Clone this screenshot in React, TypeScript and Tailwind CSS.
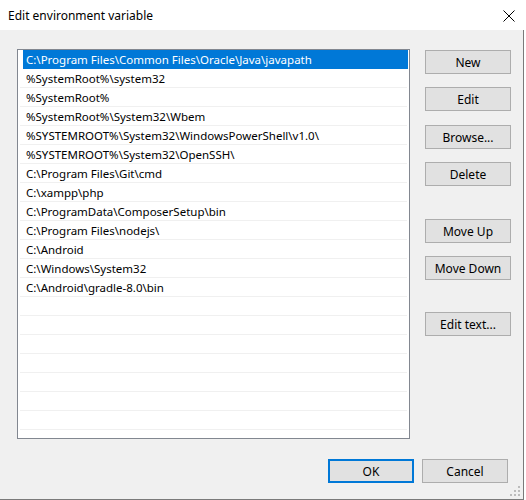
import type { FC } from 'react'

const paths: string[] = [
  'C:\\Program Files\\Common Files\\Oracle\\Java\\javapath',
  '%SystemRoot%\\system32',
  '%SystemRoot%',
  '%SystemRoot%\\System32\\Wbem',
  '%SYSTEMROOT%\\System32\\WindowsPowerShell\\v1.0\\',
  '%SYSTEMROOT%\\System32\\OpenSSH\\',
  'C:\\Program Files\\Git\\cmd',
  'C:\\xampp\\php',
  'C:\\ProgramData\\ComposerSetup\\bin',
  'C:\\Program Files\\nodejs\\',
  'C:\\Android',
  'C:\\Windows\\System32',
  'C:\\Android\\gradle-8.0\\bin'
]

// the list shows empty rows below the entries
const rows: string[] = [...paths, ...Array(8).fill('')]

const DialogButton: FC<{ label: string; className?: string; primary?: boolean }> = ({
  label,
  className = '',
  primary = false
}) => (
  <button
    type="button"
    className={`w-[86px] h-[24px] bg-[#e1e1e1] text-[12px] text-black leading-none flex items-center justify-center pt-[1px] ${
      primary ? 'border-2 border-[#0078d7]' : 'border border-[#adadad]'
    } ${className}`}
  >
    {label}
  </button>
)

const ResizeGrip: FC = () => (
  <svg width="10" height="10" viewBox="0 0 10 10" className="absolute right-[3px] bottom-[3px]">
    {[
      [8, 0],
      [4, 4],
      [8, 4],
      [0, 8],
      [4, 8],
      [8, 8]
    ].map(([x, y]) => (
      <rect key={`${x}-${y}`} x={x} y={y} width="2" height="2" fill="#bcbcbc" />
    ))}
  </svg>
)

export default function App() {
  return (
    <div
      className="w-[526px] h-[500px] bg-white flex flex-col overflow-hidden text-black"
      style={{ fontFamily: '"Noto Sans", "Open Sans", Arial, sans-serif' }}
    >
      {/* title bar */}
      <div className="h-[30px] shrink-0 bg-white flex items-center justify-between pl-[8px] pr-[10px] pt-[1px]">
        <span className="text-[12px] leading-none">Edit environment variable</span>
        <svg width="12" height="12" viewBox="0 0 12 12" className="mr-[1px]">
          <path d="M0.5 0.5L11.5 11.5M11.5 0.5L0.5 11.5" stroke="#000" strokeWidth="1" fill="none" />
        </svg>
      </div>

      {/* body */}
      <div className="relative flex-1 w-[524px] bg-[#f0f0f0] border-r border-b border-[#7a7a7a] flex flex-col">
        <div className="flex pt-[19px] pl-[17px]">
          <div className="w-[393px] h-[390px] bg-white border border-[#828790] pl-[5px] pr-[1px] overflow-hidden">
            {rows.map((path, i) => (
              <div
                key={i}
                className={`h-[19px] flex items-center pt-[2px] text-[11.5px] leading-none whitespace-nowrap border-b ${
                  i === 0
                    ? 'bg-[#0078d7] text-white border-[#0078d7] pl-[3px]'
                    : 'border-[#f0f0f0] ml-[-3px] mr-[1px] pl-[6px]'
                }`}
              >
                {path}
              </div>
            ))}
          </div>

          <div className="flex flex-col ml-[15px] pt-[1px]">
            <DialogButton label="New" />
            <DialogButton label="Edit" className="mt-[13px]" />
            <DialogButton label="Browse..." className="mt-[14px]" />
            <DialogButton label="Delete" className="mt-[13px]" />
            <DialogButton label="Move Up" className="mt-[33px]" />
            <DialogButton label="Move Down" className="mt-[13px]" />
            <DialogButton label="Edit text..." className="mt-[32px]" />
          </div>
        </div>

        <div className="flex justify-end gap-[8px] mt-[20px] pr-[15px]">
          <DialogButton label="OK" primary />
          <DialogButton label="Cancel" />
        </div>

        <ResizeGrip />
      </div>
    </div>
  )
}
